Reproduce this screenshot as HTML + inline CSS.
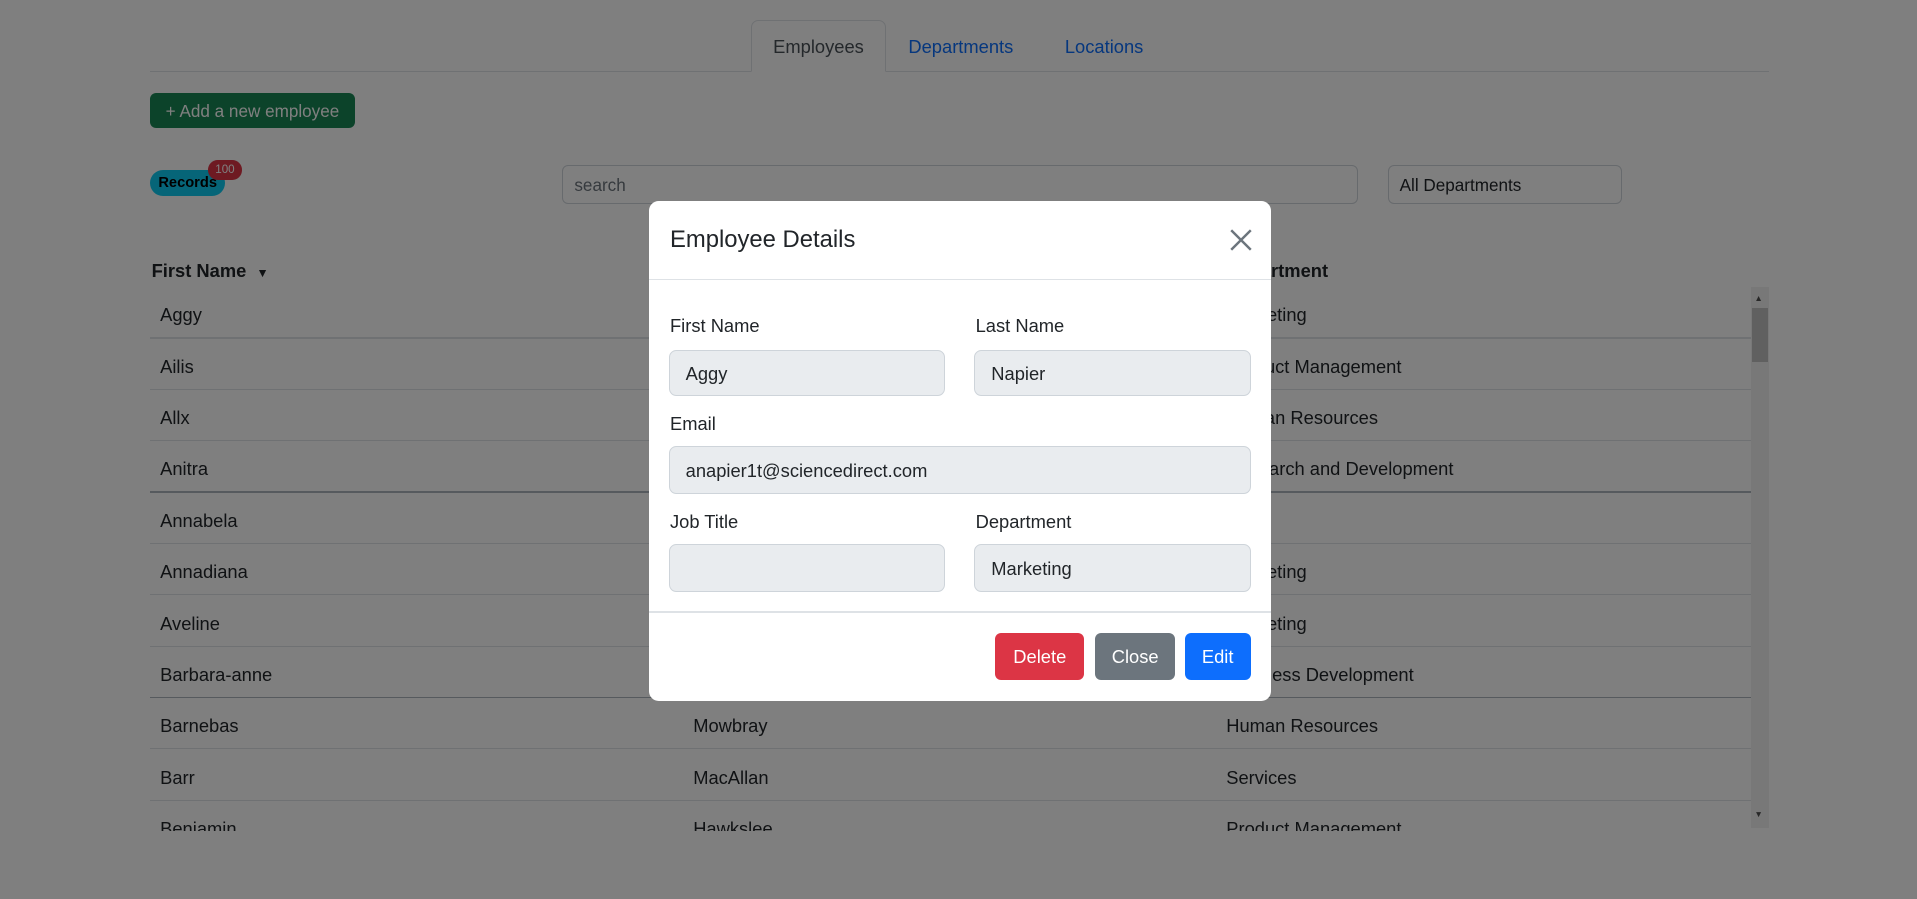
<!DOCTYPE html>
<html><head><meta charset="utf-8"><style>
html{zoom:1.22258}
body{margin:0;width:1568px;height:735px;overflow:hidden;position:relative;font-family:"Liberation Sans",sans-serif;color:#212529;background:#fff}
.abs{position:absolute}
.tabline{left:123px;top:58px;width:1324px;height:1px;background:#dee2e6}
.tab{top:17px;height:42px;line-height:42px;font-size:15px;color:#0d6efd}
.tab.act{left:614px;top:16px;width:111px;border:1px solid #dee2e6;border-bottom:1px solid #fff;border-radius:6px 6px 0 0;background:#fff;color:#495057;text-align:center;box-sizing:border-box;height:43px;line-height:43px}
.btn{border-radius:5px;color:#fff;text-align:center;box-sizing:border-box}
.inp{border:1px solid #ced4da;border-radius:5px;box-sizing:border-box;font-size:14px;color:#6c757d;padding-left:9px;line-height:33px}
.cell{font-size:15px;color:#212529}
.row{left:123px;width:1309px;height:1px;background:#dee2e6}
.ov{left:0;top:0;width:1568px;height:735px;background:rgba(0,0,0,.5)}
.modal{left:531px;top:164px;width:509px;height:409px;background:#fff;border-radius:8px}
.lbl{font-size:15px;color:#212529}
.fi{background:#e9ecef;border:1px solid #ced4da;border-radius:6px;box-sizing:border-box;font-size:15px;padding-left:13px;color:#212529}
</style></head><body>
<div class="abs tabline"></div>
<div class="abs tab act">Employees</div>
<div class="abs tab" style="left:743px">Departments</div>
<div class="abs tab" style="left:871px">Locations</div>
<div class="abs btn" style="left:123px;top:76px;width:167px;height:29px;background:#198754;line-height:31px;font-size:14px">+ Add a new employee</div>
<div class="abs" style="left:123px;top:139px;width:61px;height:21px;border-radius:11px;background:#0dcaf0;font-weight:bold;font-size:12px;line-height:22px;text-align:center;color:#000">Records</div>
<div class="abs" style="left:170px;top:131px;width:28px;height:16px;border-radius:8px;background:#dc3545;color:#fff;font-size:9.5px;line-height:17px;text-align:center">100</div>
<div class="abs inp" style="left:460px;top:135px;width:651px;height:32px">search</div>
<div class="abs inp" style="left:1135px;top:135px;width:192px;height:32px;color:#212529">All Departments</div>
<div class="abs cell" style="left:124px;top:213px;font-weight:bold">First Name &nbsp;<span style="font-size:10px">▼</span></div>
<div class="abs cell" style="left:1003px;top:213px;font-weight:bold">Department</div>
<div class="abs" style="left:1432px;top:235px;width:15px;height:442px;background:#f1f1f1"></div>
<div class="abs" style="left:1433px;top:252px;width:13px;height:44px;background:#c1c1c1"></div>
<div class="abs" style="left:1435px;top:240px;font-size:7px;color:#505050">▲</div>
<div class="abs" style="left:1435px;top:662px;font-size:7px;color:#505050">▼</div>
<div class="abs" style="left:123px;top:235px;width:1309px;height:445px;overflow:hidden">
<div style="position:relative">
<div class="abs cell" style="left:8px;top:14px">Aggy</div><div class="abs cell" style="left:444px;top:14px">Napier</div><div class="abs cell" style="left:880px;top:14px">Marketing</div>
<div class="abs row" style="left:0;top:41px"></div>
<div class="abs cell" style="left:8px;top:56px">Ailis</div><div class="abs cell" style="left:444px;top:56px">Duffree</div><div class="abs cell" style="left:880px;top:56px">Product Management</div>
<div class="abs row" style="left:0;top:83px"></div>
<div class="abs cell" style="left:8px;top:98px">Allx</div><div class="abs cell" style="left:444px;top:98px">Pelcheur</div><div class="abs cell" style="left:880px;top:98px">Human Resources</div>
<div class="abs row" style="left:0;top:125px"></div>
<div class="abs cell" style="left:8px;top:140px">Anitra</div><div class="abs cell" style="left:444px;top:140px">Bourget</div><div class="abs cell" style="left:880px;top:140px">Research and Development</div>
<div class="abs row" style="left:0;top:167px;background:#adb5bd"></div>
<div class="abs cell" style="left:8px;top:182px">Annabela</div><div class="abs cell" style="left:444px;top:182px">Corkitt</div><div class="abs cell" style="left:880px;top:182px">Legal</div>
<div class="abs row" style="left:0;top:209px"></div>
<div class="abs cell" style="left:8px;top:224px">Annadiana</div><div class="abs cell" style="left:444px;top:224px">Lowdes</div><div class="abs cell" style="left:880px;top:224px">Marketing</div>
<div class="abs row" style="left:0;top:251px"></div>
<div class="abs cell" style="left:8px;top:266px">Aveline</div><div class="abs cell" style="left:444px;top:266px">Edgson</div><div class="abs cell" style="left:880px;top:266px">Marketing</div>
<div class="abs row" style="left:0;top:293px"></div>
<div class="abs cell" style="left:8px;top:308px">Barbara-anne</div><div class="abs cell" style="left:444px;top:308px">Fowles</div><div class="abs cell" style="left:880px;top:308px">Business Development</div>
<div class="abs row" style="left:0;top:335px;background:#adb5bd"></div>
<div class="abs cell" style="left:8px;top:350px">Barnebas</div><div class="abs cell" style="left:444px;top:350px">Mowbray</div><div class="abs cell" style="left:880px;top:350px">Human Resources</div>
<div class="abs row" style="left:0;top:377px"></div>
<div class="abs cell" style="left:8px;top:392px">Barr</div><div class="abs cell" style="left:444px;top:392px">MacAllan</div><div class="abs cell" style="left:880px;top:392px">Services</div>
<div class="abs row" style="left:0;top:419px"></div>
<div class="abs cell" style="left:8px;top:434px">Benjamin</div><div class="abs cell" style="left:444px;top:434px">Hawkslee</div><div class="abs cell" style="left:880px;top:434px">Product Management</div>
</div></div>
<div class="abs ov"></div>
<div class="abs modal">
<div class="abs" style="left:17px;top:21px;font-size:19.5px">Employee Details</div>
<svg class="abs" style="left:475px;top:23px" width="18" height="18" viewBox="0 0 18 18"><path d="M1 1L17 17M17 1L1 17" stroke="#6c757d" stroke-width="2"/></svg>
<div class="abs" style="left:0;top:64px;width:509px;height:1px;background:#dee2e6"></div>
<div class="abs lbl" style="left:17px;top:94px">First Name</div>
<div class="abs lbl" style="left:267px;top:94px">Last Name</div>
<div class="abs fi" style="left:16px;top:122px;width:226px;height:38px;line-height:38px">Aggy</div>
<div class="abs fi" style="left:266px;top:122px;width:226px;height:38px;line-height:38px">Napier</div>
<div class="abs lbl" style="left:17px;top:174px">Email</div>
<div class="abs fi" style="left:16px;top:201px;width:476px;height:39px;line-height:39px">anapier1t@sciencedirect.com</div>
<div class="abs lbl" style="left:17px;top:254px">Job Title</div>
<div class="abs lbl" style="left:267px;top:254px">Department</div>
<div class="abs fi" style="left:16px;top:281px;width:226px;height:39px"></div>
<div class="abs fi" style="left:266px;top:281px;width:226px;height:39px;line-height:39px">Marketing</div>
<div class="abs" style="left:0;top:336px;width:509px;height:1px;background:#dee2e6"></div>
<div class="abs btn" style="left:283px;top:354px;width:73px;height:38px;line-height:40px;background:#dc3545;font-size:15px">Delete</div>
<div class="abs btn" style="left:365px;top:354px;width:65px;height:38px;line-height:40px;background:#6c757d;font-size:15px">Close</div>
<div class="abs btn" style="left:438px;top:354px;width:54px;height:38px;line-height:40px;background:#0d6efd;font-size:15px">Edit</div>
</div>
</body></html>
